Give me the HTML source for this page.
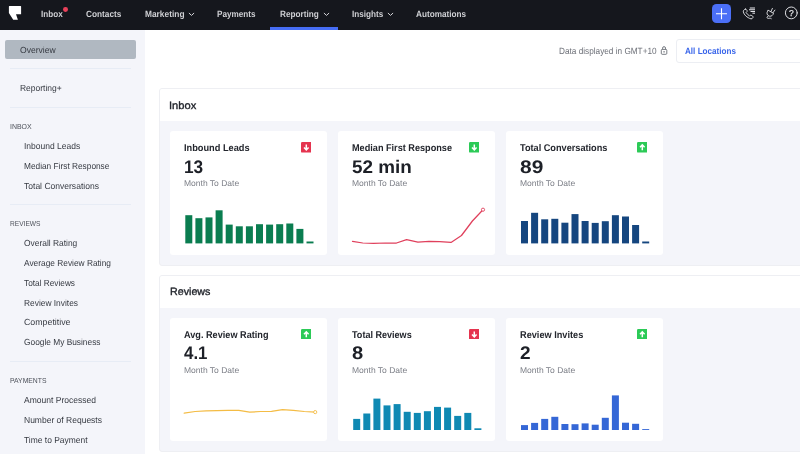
<!DOCTYPE html>
<html><head><meta charset="utf-8"><title>Reporting Overview</title>
<style>
*{box-sizing:border-box;margin:0;padding:0}
html,body{width:800px;height:454px;overflow:hidden;background:#fff;will-change:transform;font-family:"Liberation Sans",sans-serif;color:#2a2d34;text-rendering:geometricPrecision}
.a{position:absolute}
.x{position:absolute;white-space:nowrap;line-height:normal;transform-origin:0 0}
#nav{position:absolute;left:0;top:0;width:800px;height:30px;background:#15171d}
#side{position:absolute;left:0;top:29px;width:145px;height:425px;background:#f4f5fa}
.hr{position:absolute;left:10px;width:121px;height:1px;background:#e7ecf5}
.nv{font-size:9px;font-weight:bold;color:#cfd0d4}
.hd{font-size:9px;color:#6d7078}
.loc{font-size:9px;font-weight:bold;color:#3a66ea}
.sl{font-size:8.8px;color:#363a42}
.sh{font-size:7.2px;color:#4d515a}
.st{font-size:10.6px;color:#23262d;-webkit-text-stroke:0.35px #23262d}
.ct{font-size:9.8px;font-weight:bold;color:#23262d}
.cv{font-size:18.2px;font-weight:bold;color:#1d2027}
.cm{font-size:8.4px;color:#7b7e86}
.sec{position:absolute;left:159px;width:660px;background:#f4f5fa;border:1px solid #eeeff3;border-radius:3px;overflow:hidden}
.sec i{position:absolute;left:0;top:0;width:100%;height:32px;background:#fff;display:block}
.card{position:absolute;width:157px;height:123px;background:#fff;border-radius:3px}
.bd{position:absolute;width:10.6px;height:10.6px;border-radius:1.2px}
.q{font-size:8.5px;color:#e8e9ec;-webkit-text-stroke:0.25px #e8e9ec}
</style></head><body>
<div id="side"></div>
<div class="a" style="left:5px;top:40px;width:131px;height:19px;background:#b0b8c1;border-radius:2px"></div>
<div class="hr" style="top:68px"></div>
<div class="hr" style="top:107px"></div>
<div class="hr" style="top:204px"></div>
<div class="hr" style="top:361px"></div>
<div id="nav"></div>
<svg class="a" style="left:0;top:0" width="30" height="29" viewBox="0 0 30 29"><path d="M9.400 5.900H20.600a.5.5 0 0 1 .5.500V14.200H16L17.900 19.800H13.200L8.900 13.100V6.400a.5.500 0 0 1 .5-.5z" fill="#fff"/></svg>
<div class="a" style="left:63px;top:7.2px;width:4.8px;height:4.8px;border-radius:50%;background:#e8415a"></div>
<div class="a" style="left:270px;top:27px;width:68px;height:3px;background:#466df4"></div>
<svg class="a" style="left:188.2px;top:12px" width="7" height="5" viewBox="0 0 7 5"><path d="M0.9 1 L3.5 3.4 L6.1 1" fill="none" stroke="#d4d5d9" stroke-width="1"/></svg>
<svg class="a" style="left:323px;top:12px" width="7" height="5" viewBox="0 0 7 5"><path d="M0.9 1 L3.5 3.4 L6.1 1" fill="none" stroke="#d4d5d9" stroke-width="1"/></svg>
<svg class="a" style="left:386.9px;top:12px" width="7" height="5" viewBox="0 0 7 5"><path d="M0.9 1 L3.5 3.4 L6.1 1" fill="none" stroke="#d4d5d9" stroke-width="1"/></svg>
<div class="a" style="left:712px;top:4px;width:19px;height:19.4px;border-radius:4.5px;background:#4b6ff6"></div>
<svg class="a" style="left:712px;top:4px" width="19" height="19.4" viewBox="0 0 19 19.4"><path d="M9.5 4.2V15.2M4 9.7H15" stroke="#fff" stroke-width="1.1" fill="none"/></svg>
<svg class="a" style="left:0;top:0" width="800" height="29" viewBox="0 0 800 29" fill="none" stroke="#e4e5e9" stroke-width="0.9" stroke-linecap="round" stroke-linejoin="round"><path d="M745.4 9.1C744.6 9.3 743.6 10 743.3 11.1C743.3 13.5 745.5 16.5 749.6 18.4C750.6 18.9 751.4 18.9 752 18.7L753.1 17.3C753.3 16.9 753.2 16.6 752.8 16.3L751.2 15.3C750.8 15.1 750.4 15.2 750.1 15.5L749.6 16C748.2 15.2 746.900 13.9 746.100 12.5L746.900 11.7C747.2 11.4 747.3 11 747.100 10.7L746.100 9.3C745.9 9.1 745.7 9 745.4 9.1Z"/><path d="M749.8 8H755M749 9.750H755M750.5 11.5H755M752.4 13.2H755" stroke-width="1" stroke-linecap="butt"/><path d="M768.300 10.300L773.600 13.400L772.900 14.700C772 16.200 770 16.700 768.500 15.800C767 14.900 766.500 13 767.400 11.500Z"/><path d="M770.900 11.600L772.400 8.400M772.900 12.800L774.900 10.100M768.300 15.700C767.200 16.600 766.600 17.600 767.400 18.200C768.400 18.900 770 17.400 771.300 18.600"/><circle cx="791.3" cy="12.9" r="5.900" stroke-width="0.95"/></svg>
<svg class="a" style="left:655px;top:42px" width="16" height="16" viewBox="655 42 16 16" fill="none" stroke="#5f636b" stroke-width="0.85"><rect x="661.3" y="49.4" width="5.5" height="4.900" rx="0.9"/><path d="M662.600 49.400V48.100a1.450 1.450 0 0 1 2.900 0V49.400"/><rect x="663.500" y="51.100" width="1.100" height="1.400" fill="#5f636b" stroke="none"/></svg>
<div class="a" style="left:675.5px;top:39px;width:140px;height:23.5px;border:1px solid #eceef3;border-radius:3px;background:#fff"></div>
<div class="sec" style="top:88px;height:177.500px"><i></i></div>
<div class="sec" style="top:274.500px;height:177px"><i></i></div>
<div class="card" style="left:170px;top:131px;height:124px"></div>
<svg class="a" style="left:300.8px;top:142px" width="10.6" height="10.6" viewBox="0 0 10.6 10.6"><rect width="10.6" height="10.6" rx="1.2" fill="#e5344f"/><path d="M5.300 2.400V7.400M3 5.400L5.300 7.800L7.600 5.400" stroke="#fff" stroke-width="1.500" fill="none"/></svg>
<div class="card" style="left:338px;top:131px;height:124px"></div>
<svg class="a" style="left:468.8px;top:142px" width="10.6" height="10.6" viewBox="0 0 10.6 10.6"><rect width="10.6" height="10.6" rx="1.2" fill="#2cca57"/><path d="M5.300 2.400V7.400M3 5.400L5.300 7.800L7.600 5.400" stroke="#fff" stroke-width="1.500" fill="none"/></svg>
<div class="card" style="left:506px;top:131px;height:124px"></div>
<svg class="a" style="left:636.8px;top:142px" width="10.6" height="10.6" viewBox="0 0 10.6 10.6"><rect width="10.6" height="10.6" rx="1.2" fill="#2cca57"/><path d="M5.300 8.200V3.200M3 5.200L5.300 2.800L7.600 5.200" stroke="#fff" stroke-width="1.500" fill="none"/></svg>
<div class="card" style="left:170px;top:318px;height:123px"></div>
<svg class="a" style="left:300.8px;top:328.7px" width="10.6" height="10.6" viewBox="0 0 10.6 10.6"><rect width="10.6" height="10.6" rx="1.2" fill="#2cca57"/><path d="M5.300 8.200V3.200M3 5.200L5.300 2.800L7.600 5.200" stroke="#fff" stroke-width="1.500" fill="none"/></svg>
<div class="card" style="left:338px;top:318px;height:123px"></div>
<svg class="a" style="left:468.8px;top:328.7px" width="10.6" height="10.6" viewBox="0 0 10.6 10.6"><rect width="10.6" height="10.6" rx="1.2" fill="#e5344f"/><path d="M5.300 2.400V7.400M3 5.400L5.300 7.800L7.600 5.400" stroke="#fff" stroke-width="1.500" fill="none"/></svg>
<div class="card" style="left:506px;top:318px;height:123px"></div>
<svg class="a" style="left:636.8px;top:328.7px" width="10.6" height="10.6" viewBox="0 0 10.6 10.6"><rect width="10.6" height="10.6" rx="1.2" fill="#2cca57"/><path d="M5.300 8.200V3.200M3 5.200L5.300 2.800L7.600 5.200" stroke="#fff" stroke-width="1.500" fill="none"/></svg>
<svg class="a" style="left:0;top:0" width="800" height="454" viewBox="0 0 800 454"><rect x="185.3" y="215.2" width="7" height="28.2" fill="#0a7d50"/><rect x="195.4" y="218.2" width="7" height="25.2" fill="#0a7d50"/><rect x="205.5" y="217.4" width="7" height="26.0" fill="#0a7d50"/><rect x="215.6" y="210.3" width="7" height="33.1" fill="#0a7d50"/><rect x="225.7" y="224.6" width="7" height="18.8" fill="#0a7d50"/><rect x="235.8" y="226.3" width="7" height="17.1" fill="#0a7d50"/><rect x="245.9" y="226.3" width="7" height="17.1" fill="#0a7d50"/><rect x="256.0" y="224.2" width="7" height="19.2" fill="#0a7d50"/><rect x="266.1" y="224.6" width="7" height="18.8" fill="#0a7d50"/><rect x="276.2" y="224.2" width="7" height="19.2" fill="#0a7d50"/><rect x="286.3" y="223.5" width="7" height="19.9" fill="#0a7d50"/><rect x="296.4" y="228.9" width="7" height="14.5" fill="#0a7d50"/><rect x="306.5" y="241.5" width="7" height="1.9" fill="#0a7d50"/><path d="M352.5 241.3 L362.8 243.0 L373.5 243.4 L385.2 243.0 L396.5 243.0 L406.6 239.6 L417.9 242.1 L429.0 241.3 L439.7 241.7 L451.0 242.4 L461.5 235.5 L472.4 221.0 L483.0 209.7" fill="none" stroke="#e0405c" stroke-width="1.25" stroke-linejoin="round" stroke-linecap="round"/><circle cx="483.0" cy="209.7" r="1.6" fill="#fff" stroke="#e0405c" stroke-width="0.9"/><rect x="521.0" y="221.0" width="7" height="22.4" fill="#15467f"/><rect x="531.1" y="212.8" width="7" height="30.6" fill="#15467f"/><rect x="541.2" y="219.3" width="7" height="24.1" fill="#15467f"/><rect x="551.3" y="218.8" width="7" height="24.6" fill="#15467f"/><rect x="561.4" y="222.7" width="7" height="20.7" fill="#15467f"/><rect x="571.5" y="214.1" width="7" height="29.3" fill="#15467f"/><rect x="581.6" y="221.0" width="7" height="22.4" fill="#15467f"/><rect x="591.7" y="222.9" width="7" height="20.5" fill="#15467f"/><rect x="601.8" y="221.2" width="7" height="22.2" fill="#15467f"/><rect x="611.9" y="215.2" width="7" height="28.2" fill="#15467f"/><rect x="622.0" y="216.5" width="7" height="26.9" fill="#15467f"/><rect x="632.1" y="225.0" width="7" height="18.4" fill="#15467f"/><rect x="642.2" y="241.5" width="7" height="1.9" fill="#15467f"/><path d="M184.2 413.2 L195.1 411.5 L206.0 410.8 L217.0 410.6 L227.9 410.4 L238.8 410.4 L249.7 412.1 L260.6 411.5 L271.5 411.3 L282.5 409.6 L293.4 410.3 L304.3 411.5 L315.2 412.1" fill="none" stroke="#f4bc45" stroke-width="1.25" stroke-linejoin="round" stroke-linecap="round"/><circle cx="315.2" cy="412.1" r="1.6" fill="#fff" stroke="#f4bc45" stroke-width="0.9"/><rect x="353.2" y="418.9" width="7" height="11.1" fill="#0f89b3"/><rect x="363.3" y="413.5" width="7" height="16.5" fill="#0f89b3"/><rect x="373.4" y="398.6" width="7" height="31.4" fill="#0f89b3"/><rect x="383.5" y="405.4" width="7" height="24.6" fill="#0f89b3"/><rect x="393.6" y="404.1" width="7" height="25.9" fill="#0f89b3"/><rect x="403.7" y="411.8" width="7" height="18.2" fill="#0f89b3"/><rect x="413.8" y="412.9" width="7" height="17.1" fill="#0f89b3"/><rect x="423.9" y="411.2" width="7" height="18.8" fill="#0f89b3"/><rect x="434.0" y="406.9" width="7" height="23.1" fill="#0f89b3"/><rect x="444.1" y="407.6" width="7" height="22.4" fill="#0f89b3"/><rect x="454.2" y="415.9" width="7" height="14.1" fill="#0f89b3"/><rect x="464.3" y="412.9" width="7" height="17.1" fill="#0f89b3"/><rect x="474.4" y="428.3" width="7" height="1.7" fill="#0f89b3"/><rect x="521.0" y="425.1" width="7" height="4.9" fill="#3567d6"/><rect x="531.1" y="422.9" width="7" height="7.1" fill="#3567d6"/><rect x="541.2" y="418.9" width="7" height="11.1" fill="#3567d6"/><rect x="551.3" y="416.8" width="7" height="13.2" fill="#3567d6"/><rect x="561.4" y="424.0" width="7" height="6.0" fill="#3567d6"/><rect x="571.5" y="424.2" width="7" height="5.8" fill="#3567d6"/><rect x="581.6" y="423.4" width="7" height="6.6" fill="#3567d6"/><rect x="591.7" y="424.7" width="7" height="5.3" fill="#3567d6"/><rect x="601.8" y="417.8" width="7" height="12.2" fill="#3567d6"/><rect x="611.9" y="395.4" width="7" height="34.6" fill="#3567d6"/><rect x="622.0" y="422.7" width="7" height="7.3" fill="#3567d6"/><rect x="632.1" y="423.8" width="7" height="6.2" fill="#3567d6"/><rect x="642.2" y="429.1" width="7" height="0.9" fill="#3567d6"/></svg>
<div class="x nv" id="t0" style="left:40.5px;top:9px;transform:scaleX(0.9042)">Inbox</div>
<div class="x nv" id="t1" style="left:86px;top:9px;transform:scaleX(0.9191)">Contacts</div>
<div class="x nv" id="t2" style="left:145px;top:9px;transform:scaleX(0.9291)">Marketing</div>
<div class="x nv" id="t3" style="left:217.3px;top:9px;transform:scaleX(0.9076)">Payments</div>
<div class="x nv" id="t4" style="left:279.8px;top:9px;transform:scaleX(0.9129)">Reporting</div>
<div class="x nv" id="t5" style="left:351.8px;top:9px;transform:scaleX(0.9068)">Insights</div>
<div class="x nv" id="t6" style="left:416px;top:9px;transform:scaleX(0.9091)">Automations</div>
<div class="x hd" id="t7" style="left:559px;top:46px;transform:scaleX(0.9138)">Data displayed in GMT+10</div>
<div class="x loc" id="t8" style="left:685px;top:46px;transform:scaleX(0.9024)">All Locations</div>
<div class="x sl" id="t9" style="left:19.6px;top:45px;transform:scaleX(0.9735)">Overview</div>
<div class="x sl" id="t10" style="left:19.6px;top:83px;transform:scaleX(0.9635)">Reporting+</div>
<div class="x sh" id="t11" style="left:9.9px;top:122px;transform:scaleX(0.9654)">INBOX</div>
<div class="x sl" id="t12" style="left:24px;top:141px;transform:scaleX(0.9670)">Inbound Leads</div>
<div class="x sl" id="t13" style="left:24px;top:161px;transform:scaleX(0.9441)">Median First Response</div>
<div class="x sl" id="t14" style="left:24px;top:181px;transform:scaleX(0.9694)">Total Conversations</div>
<div class="x sh" id="t15" style="left:9.9px;top:219px;transform:scaleX(0.9169)">REVIEWS</div>
<div class="x sl" id="t16" style="left:24px;top:238px;transform:scaleX(0.9561)">Overall Rating</div>
<div class="x sl" id="t17" style="left:24px;top:258px;transform:scaleX(0.9479)">Average Review Rating</div>
<div class="x sl" id="t18" style="left:24px;top:278px;transform:scaleX(0.9396)">Total Reviews</div>
<div class="x sl" id="t19" style="left:24px;top:298px;transform:scaleX(0.9521)">Review Invites</div>
<div class="x sl" id="t20" style="left:24px;top:317px;transform:scaleX(1.0010)">Competitive</div>
<div class="x sl" id="t21" style="left:24px;top:337px;transform:scaleX(0.9481)">Google My Business</div>
<div class="x sh" id="t22" style="left:9.9px;top:376px;transform:scaleX(0.9484)">PAYMENTS</div>
<div class="x sl" id="t23" style="left:24px;top:395px;transform:scaleX(0.9687)">Amount Processed</div>
<div class="x sl" id="t24" style="left:24px;top:415px;transform:scaleX(0.9667)">Number of Requests</div>
<div class="x sl" id="t25" style="left:24px;top:435px;transform:scaleX(0.9596)">Time to Payment</div>
<div class="x st" id="t26" style="left:169.4px;top:100px;transform:scaleX(1.0493)">Inbox</div>
<div class="x st" id="t27" style="left:169.6px;top:286px;transform:scaleX(1.0088)">Reviews</div>
<div class="x ct" id="t28" style="left:183.8px;top:143px;transform:scaleX(0.9416)">Inbound Leads</div>
<div class="x cv" id="t29" style="left:183.8px;top:157px;transform:scaleX(0.9489)">13</div>
<div class="x cm" id="t30" style="left:183.8px;top:178px;transform:scaleX(1.0160)">Month To Date</div>
<div class="x ct" id="t31" style="left:351.8px;top:143px;transform:scaleX(0.9324)">Median First Response</div>
<div class="x cv" id="t32" style="left:351.8px;top:157px;transform:scaleX(1.0377)">52 min</div>
<div class="x cm" id="t33" style="left:351.8px;top:178px;transform:scaleX(1.0160)">Month To Date</div>
<div class="x ct" id="t34" style="left:519.8px;top:143px;transform:scaleX(0.9352)">Total Conversations</div>
<div class="x cv" id="t35" style="left:519.8px;top:157px;transform:scaleX(1.1515)">89</div>
<div class="x cm" id="t36" style="left:519.8px;top:178px;transform:scaleX(1.0160)">Month To Date</div>
<div class="x ct" id="t37" style="left:183.8px;top:330px;transform:scaleX(0.9331)">Avg. Review Rating</div>
<div class="x cv" id="t38" style="left:183.8px;top:343px;transform:scaleX(0.9290)">4.1</div>
<div class="x cm" id="t39" style="left:183.8px;top:365px;transform:scaleX(1.0160)">Month To Date</div>
<div class="x ct" id="t40" style="left:351.8px;top:330px;transform:scaleX(0.9240)">Total Reviews</div>
<div class="x cv" id="t41" style="left:351.8px;top:343px;transform:scaleX(1.1062)">8</div>
<div class="x cm" id="t42" style="left:351.8px;top:365px;transform:scaleX(1.0160)">Month To Date</div>
<div class="x ct" id="t43" style="left:519.8px;top:330px;transform:scaleX(0.9373)">Review Invites</div>
<div class="x cv" id="t44" style="left:519.8px;top:343px;transform:scaleX(1.0469)">2</div>
<div class="x cm" id="t45" style="left:519.8px;top:365px;transform:scaleX(1.0160)">Month To Date</div>
<div class="x q" id="t46" style="left:788.9px;top:8px">?</div>
</body></html>
